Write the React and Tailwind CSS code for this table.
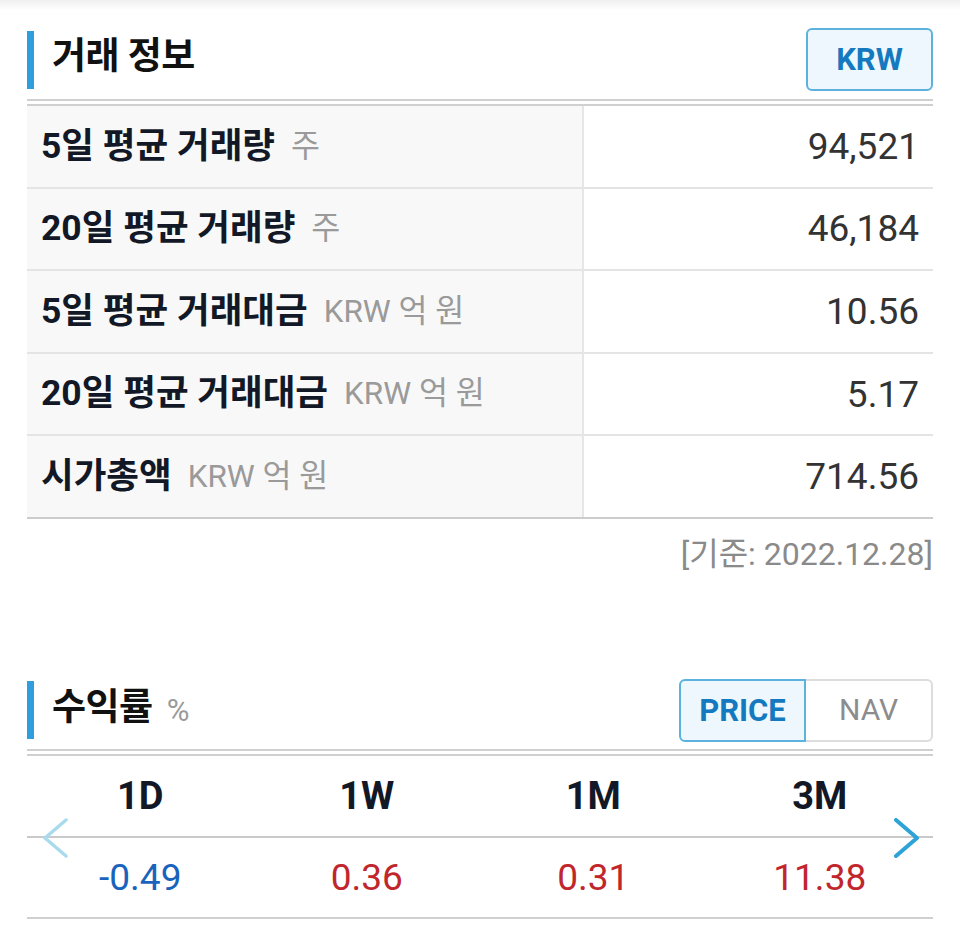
import React from "react";

const rows = [
  { label: "5일 평균 거래량", unit: "주", value: "94,521" },
  { label: "20일 평균 거래량", unit: "주", value: "46,184" },
  { label: "5일 평균 거래대금", unit: "KRW 억 원", value: "10.56" },
  { label: "20일 평균 거래대금", unit: "KRW 억 원", value: "5.17" },
  { label: "시가총액", unit: "KRW 억 원", value: "714.56" },
];

const returns = [
  { k: "1D", v: "-0.49", c: "text-[#1a63bd]" },
  { k: "1W", v: "0.36", c: "text-[#c0262c]" },
  { k: "1M", v: "0.31", c: "text-[#c0262c]" },
  { k: "3M", v: "11.38", c: "text-[#c0262c]" },
];

function DoubleLine() {
  return (
    <div className="flex flex-col gap-[3px]">
      <div className="h-[2px] bg-[#d0d0d0]" />
      <div className="h-[2px] bg-[#d0d0d0]" />
    </div>
  );
}

export default function App() {
  return (
    <div className="w-[960px] min-h-[927px] bg-white font-['Roboto','Noto_Sans_CJK_KR',sans-serif] text-[#141824]">
      <div className="h-[10px] bg-gradient-to-b from-[#efefef] to-white" />
      <div className="px-[27px]">
        {/* Section 1 header */}
        <div className="mt-[18px] h-[63px] flex items-center justify-between">
          <div className="flex items-center h-full">
            <div className="w-[7px] h-[58px] bg-[#2f9ede]" />
            <div className="ml-[18px] mb-[6px] text-[37px] font-bold leading-none tracking-[-0.5px] text-[#111]">거래 정보</div>
          </div>
          <div className="w-[127px] h-[63px] rounded-[6px] border-2 border-[#5cb1de] bg-[#eef7fd] flex items-center justify-center text-[31px] font-bold text-[#1479bf] leading-none">
            KRW
          </div>
        </div>
        <div className="mt-[8px]">
          <DoubleLine />
        </div>
        {/* Table */}
        <div>
          {rows.map((r, i) => (
            <div
              key={r.label}
              className={`flex h-[82.6px] border-b-2 ${i === rows.length - 1 ? "border-[#cccccc]" : "border-[#e4e4e4]"}`}
            >
              <div className="w-[557px] shrink-0 bg-[#f8f8f8] border-r-2 border-[#e6e6e6] flex items-center pl-[14px]">
                <span className="text-[35.5px] font-bold leading-none text-[#121826]">{r.label}</span>
                <span className="ml-[16px] text-[31.5px] leading-none text-[#9a9a9a]">{r.unit}</span>
              </div>
              <div className="flex-1 flex items-center justify-end pr-[14px] text-[37px] leading-none text-[#333]">
                {r.value}
              </div>
            </div>
          ))}
        </div>
        <div className="mt-[19px] text-right text-[32px] leading-none text-[#8a8a8a]">[기준: 2022.12.28]</div>

        {/* Section 2 header */}
        <div className="mt-[109px] h-[63px] flex items-center justify-between">
          <div className="flex items-center h-full">
            <div className="w-[7px] h-[58px] bg-[#2f9ede]" />
            <div className="ml-[18px] mb-[6px] text-[37px] font-bold leading-none tracking-[-0.5px] text-[#111]">수익률</div>
            <div className="ml-[14px] text-[31px] leading-none text-[#9a9a9a]">%</div>
          </div>
          <div className="flex h-[63px]">
            <div className="w-[127px] h-full rounded-l-[6px] border-2 border-[#5cb1de] bg-[#eef7fd] flex items-center justify-center text-[31px] font-bold text-[#1479bf] leading-none">
              PRICE
            </div>
            <div className="w-[127px] h-full rounded-r-[6px] border-2 border-l-0 border-[#dddddd] bg-white flex items-center justify-center text-[30px] text-[#8c8c8c] leading-none">
              NAV
            </div>
          </div>
        </div>
        <div className="mt-[7px]">
          <DoubleLine />
        </div>
        <div className="relative">
          <div className="grid grid-cols-4 h-[82px] border-b-2 border-[#c9c9c9]">
            {returns.map((r) => (
              <div key={r.k} className="flex items-center justify-center text-[38px] font-bold leading-none text-[#121826]">
                {r.k}
              </div>
            ))}
          </div>
          <div className="grid grid-cols-4 h-[81px] border-b-2 border-[#d0d0d0]">
            {returns.map((r) => (
              <div key={r.k} className={`flex items-center justify-center text-[37px] leading-none ${r.c}`}>
                {r.v}
              </div>
            ))}
          </div>
          <svg className="absolute left-[16px] top-[62px]" width="26" height="40" viewBox="0 0 26 40">
            <polyline points="23,2 2,20 23,38" fill="none" stroke="#a9dbec" strokeWidth="3.5" strokeLinecap="round" strokeLinejoin="round" />
          </svg>
          <svg className="absolute left-[866px] top-[62px]" width="26" height="40" viewBox="0 0 26 40">
            <polyline points="3,2 24,20 3,38" fill="none" stroke="#2ea3d7" strokeWidth="4" strokeLinecap="round" strokeLinejoin="round" />
          </svg>
        </div>
      </div>
    </div>
  );
}
